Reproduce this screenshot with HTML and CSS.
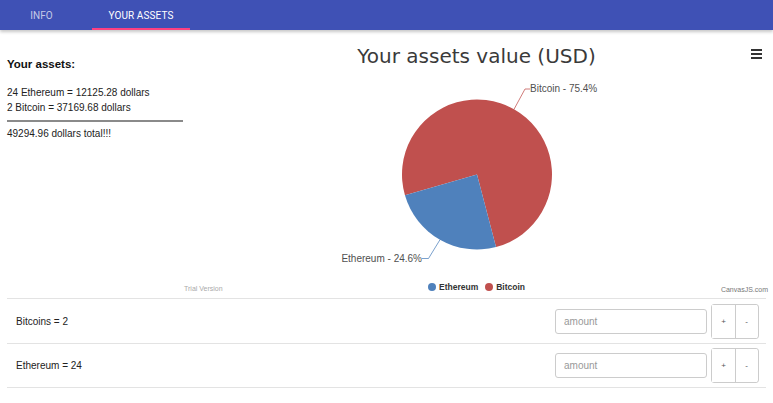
FILE: index.html
```html
<!DOCTYPE html>
<html lang="en">
<head>
<meta charset="utf-8">
<title>Your assets</title>
<link rel="stylesheet" href="styles.css">
</head>
<body>
<nav class="nav">
  <ul class="tabs">
    <li class="tab tab-info"><a>INFO</a></li>
    <li class="tab tab-assets active"><a>YOUR ASSETS</a></li>
  </ul>
</nav>
<main class="page">
  <section class="top">
    <aside class="summary">
      <h3 class="summary-title">Your assets:</h3>
      <p class="line first">24 Ethereum = 12125.28 dollars</p>
      <p class="line">2 Bitcoin = 37169.68 dollars</p>
      <hr class="rule">
      <p class="line">49294.96 dollars total!!!</p>
    </aside>
    <div class="chart">
      <h2 class="chart-title">Your assets value (USD)</h2>
      <button class="menu" aria-label="menu">
        <svg width="12" height="10" viewBox="0 0 12 10"><rect x="0" y="0" width="11" height="2" fill="#333"/><rect x="0" y="4" width="11" height="2" fill="#333"/><rect x="0" y="8" width="11" height="2" fill="#333"/></svg>
      </button>
      <svg class="pie" width="587" height="208" viewBox="0 0 587 208">
        <path d="M294 106.5 L221.95 127.35 A75 75 0 1 1 313.03 179.05 Z" fill="#C0504E"/>
        <path d="M294 106.5 L313.03 179.05 A75 75 0 0 1 221.95 127.35 Z" fill="#4F81BC"/>
        <polyline points="331,41.3 342,21 347,21" fill="none" stroke="#C0504E" stroke-opacity="0.75" stroke-width="1"/>
        <polyline points="257,171.7 245.5,190.5 239,190.5" fill="none" stroke="#4F81BC" stroke-opacity="0.75" stroke-width="1"/>
        <text class="pie-label" x="347" y="23.5">Bitcoin - 75.4%</text>
        <text class="pie-label" x="239" y="193.5" text-anchor="end">Ethereum - 24.6%</text>
      </svg>
      <div class="legend">
        <span class="legend-item"><i class="dot dot-eth"></i>Ethereum</span>
        <span class="legend-item"><i class="dot dot-btc"></i>Bitcoin</span>
      </div>
      <span class="credit trial">Trial Version</span>
      <span class="credit brand">CanvasJS.com</span>
    </div>
  </section>
  <section class="assets">
    <div class="asset-row">
      <span class="asset-name">Bitcoins = 2</span>
      <input class="amount" type="text" placeholder="amount">
      <div class="btn-group"><button class="btn">+</button><button class="btn">-</button></div>
    </div>
    <div class="asset-row">
      <span class="asset-name">Ethereum = 24</span>
      <input class="amount" type="text" placeholder="amount">
      <div class="btn-group"><button class="btn">+</button><button class="btn">-</button></div>
    </div>
  </section>
</main>
</body>
</html>
```

FILE: styles.css
```css
* { box-sizing: border-box; }
body {
  margin: 0;
  background: #fff;
  font-family: "Liberation Sans", Arial, sans-serif;
  color: #222;
}
.nav {
  height: 30px;
  background: #3f51b5;
  box-shadow: 0 2px 3px rgba(0,0,0,0.22);
  position: relative;
  z-index: 1;
}
.tabs {
  list-style: none;
  margin: 0;
  padding: 0;
  display: flex;
  gap: 9px;
  height: 30px;
}
.tab {
  height: 30px;
  display: flex;
  align-items: center;
  justify-content: center;
  font-family: Roboto, "Liberation Sans", sans-serif;
  font-size: 10px;
  letter-spacing: 0.1px;
  color: rgba(255,255,255,0.7);
}
.tab-info { width: 83px; }
.tab-assets { width: 98px; }
.tab.active {
  color: #fff;
  border-bottom: 2px solid #ff4081;
  padding-top: 2px;
}
.page { padding: 0; }
.top {
  display: flex;
  height: 268px;
}
.summary {
  width: 183px;
  padding-left: 7px;
  padding-top: 27px;
  flex: none;
}
.summary-title {
  margin: 0;
  font-size: 11.5px;
  line-height: 14px;
  font-weight: bold;
  color: #111;
}
.line {
  margin: 0;
  font-size: 10px;
  line-height: 15px;
  color: #222;
}
.line.first { margin-top: 14px; }
.rule {
  margin: 5px 0 4px;
  border: 0;
  height: 2px;
  background: #8a8a8a;
}
.chart {
  position: relative;
  width: 587px;
  flex: none;
  display: flex;
  flex-direction: column;
  align-items: center;
  padding-top: 14px;
}
.chart-title {
  margin: 0;
  font-family: "DejaVu Sans", Verdana, sans-serif;
  font-weight: normal;
  font-size: 20px;
  line-height: 24px;
  color: #3a3a3a;
}
.menu {
  position: absolute;
  left: 568px;
  top: 19px;
  padding: 0;
  border: 0;
  background: none;
  line-height: 0;
}
.pie { display: block; }
.pie-label {
  font-family: "Liberation Sans", Arial, sans-serif;
  font-size: 10px;
  fill: #505050;
}
.legend {
  display: flex;
  gap: 7px;
  margin-top: 5px;
  height: 12px;
  align-items: center;
  font-size: 8.5px;
  font-weight: bold;
  color: #333;
}
.legend-item { display: flex; align-items: center; gap: 3px; }
.dot { width: 8px; height: 8px; border-radius: 50%; display: inline-block; }
.dot-eth { background: #4F81BC; }
.dot-btc { background: #C0504E; }
.credit {
  position: absolute;
  font-size: 7px;
  line-height: 8px;
}
.trial { left: 1px; top: 255px; color: #aaa; }
.brand { right: 2px; top: 256px; color: #777; }
.assets {
  margin: 0 7px;
}
.asset-row {
  display: flex;
  align-items: center;
  height: 45px;
  border-top: 1px solid #e3e3e3;
  padding: 0 7px 0 9px;
}
.asset-row:last-child { border-bottom: 1px solid #e3e3e3; }
.asset-name {
  flex: 1;
  font-size: 10px;
  color: #222;
}
.amount {
  width: 152px;
  height: 25px;
  border: 1px solid #ccc;
  border-radius: 3px;
  padding: 0 8px;
  font-family: "Liberation Sans", Arial, sans-serif;
  font-size: 10px;
  color: #555;
}
.amount::placeholder { color: #999; }
.btn-group {
  display: flex;
  margin-left: 4px;
  width: 48px;
  height: 35px;
  border: 1px solid #ccc;
  border-radius: 3px;
}
.btn {
  width: 23px;
  height: 33px;
  border: 0;
  background: #fff;
  padding: 0;
  font-family: "Liberation Sans", Arial, sans-serif;
  font-size: 8px;
  color: #555;
}
.btn + .btn { width: 22px; border-left: 1px solid #ccc; }
```
